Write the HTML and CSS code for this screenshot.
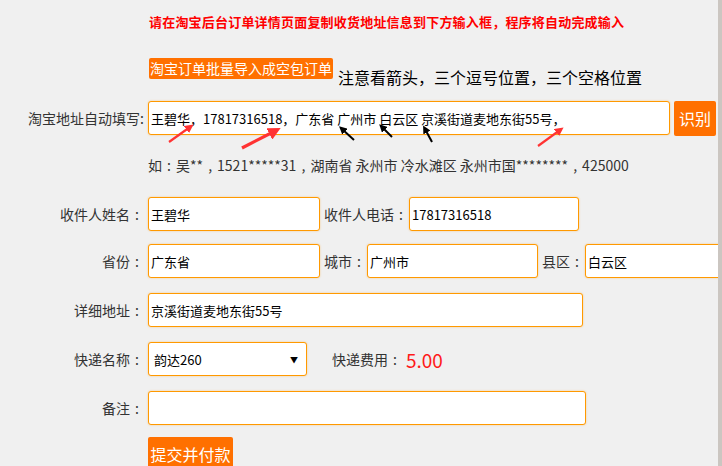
FILE: index.html
```html
<!DOCTYPE html>
<html lang="zh-CN">
<head>
    <meta charset="UTF-8">
    <title>空包订单</title>
    <link rel="stylesheet" href="styles.css">
</head>
<body>
  <div class="page">
    <p class="tip">请在淘宝后台订单详情页面复制收货地址信息到下方输入框，程序将自动完成输入</p>

    <div class="batch">
      <span class="batch-btn">淘宝订单批量导入成空包订单</span>
      <span class="note">注意看箭头，三个逗号位置，三个空格位置</span>
    </div>

    <div class="row row-auto">
      <label class="label">淘宝地址自动填写:</label>
      <input type="text" class="field f-auto" value="王碧华，17817316518，广东省 广州市 白云区 京溪街道麦地东街55号，">
      <button type="button" class="btn btn-parse">识别</button>

      <!-- arrows over the address box -->
      <svg class="arrows" width="722" height="60" viewBox="0 0 722 60">
        <defs>
          <marker id="redhead" markerWidth="4" markerHeight="4" refX="2" refY="2" orient="auto">
            <path d="M0,0 L4,2 L0,4 Z" fill="#f33"/>
          </marker>
          <marker id="blackhead" markerWidth="4" markerHeight="4" refX="2" refY="2" orient="auto">
            <path d="M0,0 L4,2 L0,4 Z" fill="#000"/>
          </marker>
        </defs>
        <line x1="169" y1="41" x2="190" y2="26" stroke="#f33" stroke-width="2.2" marker-end="url(#redhead)"/>
        <line x1="242" y1="47" x2="275" y2="30" stroke="#f33" stroke-width="3.2" marker-end="url(#redhead)"/>
        <line x1="538" y1="45" x2="560" y2="29" stroke="#f33" stroke-width="2.2" marker-end="url(#redhead)"/>
        <line x1="354" y1="39" x2="342" y2="28" stroke="#000" stroke-width="2" marker-end="url(#blackhead)"/>
        <line x1="392" y1="36" x2="382" y2="26" stroke="#000" stroke-width="2" marker-end="url(#blackhead)"/>
        <line x1="432" y1="41" x2="425" y2="28" stroke="#000" stroke-width="2" marker-end="url(#blackhead)"/>
      </svg>
    </div>

    <p class="example">如<span class="p">:</span>吴**<span class="p">,</span>1521*****31<span class="p">,</span>湖南省 永州市 冷水滩区 永州市国********<span class="p">,</span>425000</p>

    <div class="row r-name">
      <label class="label">收件人姓名<span class="p">:</span></label>
      <input type="text" class="field f-name" value="王碧华">
      <label class="sublabel">收件人电话<span class="p">:</span></label>
      <input type="text" class="field f-phone" value="17817316518">
    </div>

    <div class="row r-area">
      <label class="label">省份<span class="p">:</span></label>
      <input type="text" class="field f-prov" value="广东省">
      <label class="sublabel">城市<span class="p">:</span></label>
      <input type="text" class="field f-city" value="广州市">
      <label class="sublabel">县区<span class="p">:</span></label>
      <input type="text" class="field f-county" value="白云区">
    </div>

    <div class="row r-detail">
      <label class="label">详细地址<span class="p">:</span></label>
      <input type="text" class="field f-detail" value="京溪街道麦地东街55号">
    </div>

    <div class="row r-express">
      <label class="label">快递名称<span class="p">:</span></label>
      <span class="field select">韵达260<span class="caret">▼</span></span>
      <label class="fee-label">快递费用<span class="p">:</span></label>
      <span class="fee">5.00</span>
    </div>

    <div class="row r-remark">
      <label class="label">备注<span class="p">:</span></label>
      <input type="text" class="field f-remark">
    </div>

    <div class="submit-row">
      <button type="button" class="btn btn-submit">提交并付款</button>
    </div>
  </div>
</body>
</html>
```

FILE: styles.css
```css
body{
    margin: 0;
    background-color: #f0f0f0;
    font-family: "Noto Sans CJK SC", sans-serif;
    overflow: hidden;
}
.page{
    width: 718px;
    height: 466px;
    overflow: hidden;
    border-right: 4px solid #cbc6c1;
}
/* centred full-width punctuation */
.p{
    display: inline-block;
    width: 14px;
    text-align: center;
}
.tip{
    margin: 0;
    padding: 12px 0 0 149px;
    height: 20px;
    line-height: 20px;
    font-size: 13px;
    font-weight: bold;
    letter-spacing: 0.2px;
    color: #ff0000;
}
.batch{
    display: flex;
    align-items: flex-start;
    margin-top: 26px;
    padding-left: 149px;
    height: 43px;
}
.batch-btn{
    display: inline-block;
    padding: 0 1px;
    height: 21px;
    line-height: 21px;
    font-size: 14px;
    color: white;
    background-color: #ff7000;
    border-radius: 2px;
}
.note{
    margin: 8px 0 0 5px;
    line-height: 22px;
    font-size: 16px;
    color: #000;
}
.row{
    display: flex;
    align-items: center;
    height: 34px;
}
.row-auto{
    position: relative;
}
.label{
    flex: none;
    width: 144px;
    margin-right: 4px;
    text-align: right;
    font-size: 14px;
    color: #333;
}
.sublabel{
    flex: none;
    margin: 0 1px 0 4px;
    font-size: 14px;
    color: #333;
}
.field{
    flex: none;
    box-sizing: border-box;
    height: 34px;
    padding: 0 2px;
    border: 1px solid #ff9900;
    border-radius: 3px;
    background-color: white;
    box-shadow: 0 0 2px rgba(255, 153, 0, 0.45);
    font-family: inherit;
    font-size: 13px;
    color: #000;
    outline: none;
}
.f-auto{ width: 522px; }
.f-name{ width: 172px; }
.f-phone{ width: 170px; }
.f-prov{ width: 172px; }
.f-city{ width: 171px; }
.f-county{ width: 150px; }
.f-detail{ width: 435px; }
.f-remark{ width: 438px; }
.btn{
    border: none;
    border-radius: 2px;
    background-color: #ff7000;
    color: white;
    font-family: inherit;
    font-size: 16px;
    cursor: pointer;
}
.btn-parse{
    width: 42px;
    height: 35px;
    margin-left: 4px;
    padding: 0;
}
.arrows{
    position: absolute;
    left: 0;
    top: 0;
    overflow: visible;
    pointer-events: none;
}
.example{
    margin: 0;
    padding: 20px 0 0 148px;
    height: 20px;
    line-height: 20px;
    font-size: 14px;
    color: #333;
}
.r-name{ margin-top: 22px; }
.r-area{ margin-top: 13px; }
.r-detail{ margin-top: 15px; }
.r-express{ margin-top: 15px; }
.r-remark{ margin-top: 15px; }
.select{
    display: flex;
    align-items: center;
    justify-content: space-between;
    width: 159px;
    padding: 0 8px 0 5px;
}
.caret{
    font-size: 8px;
    color: #000;
}
.fee-label{
    margin: 0 4px 0 25px;
    font-size: 14px;
    color: #333;
}
.fee{
    font-size: 19px;
    color: #ff1a1a;
}
.submit-row{
    margin-top: 12px;
    padding-left: 148px;
}
.btn-submit{
    width: 85px;
    height: 34px;
    padding: 0;
}
```
